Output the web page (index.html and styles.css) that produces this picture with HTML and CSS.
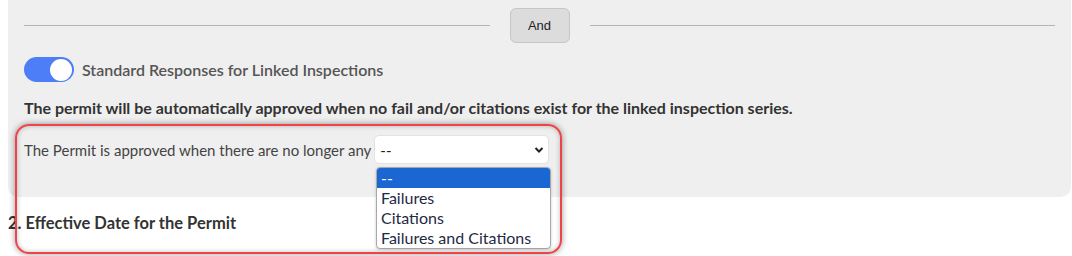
FILE: index.html
```html
<!DOCTYPE html>
<html lang="en">
<head>
<meta charset="UTF-8">
<meta name="viewport" content="width=device-width, initial-scale=1.0">
<title>Permit Approval</title>
<link rel="stylesheet" href="styles.css">
</head>
<body>
  <div class="panel">
    <div class="divider">
      <span class="line"></span>
      <button class="and-btn">And</button>
      <span class="line"></span>
    </div>

    <div class="toggle-row">
      <span class="toggle"><span class="knob"></span></span>
      <span class="toggle-label">Standard Responses for Linked Inspections</span>
    </div>

    <p class="note">The permit will be automatically approved when no fail and/or citations exist for the linked inspection series.</p>

    <div class="select-row">
      <label for="approveWhen">The Permit is approved when there are no longer any</label>
      <div class="select" id="approveWhen">
        <span>--</span>
        <svg width="10" height="8" viewBox="0 0 10 8"><path d="M1.5 2 L5 5.5 L8.5 2" fill="none" stroke="#222" stroke-width="2"/></svg>
      </div>
    </div>
  </div>

  <h3 class="section">2. Effective Date for the Permit</h3>

  <!-- open dropdown list -->
  <ul class="options">
    <li class="active">--</li>
    <li>Failures</li>
    <li>Citations</li>
    <li>Failures and Citations</li>
  </ul>

  <!-- annotation -->
  <div class="highlight"></div>
</body>
</html>
```

FILE: styles.css
```css
body {
  margin: 0;
  background: #fff;
  font-family: 'Lato', 'Liberation Sans', sans-serif;
  color: #333;
  position: relative;
  height: 256px;
  overflow: hidden;
}
.panel {
  margin-left: 8px;
  width: 1063px;
  height: 197px;
  box-sizing: border-box;
  background: #efefef;
  border-radius: 0 0 10px 10px;
  padding: 8px 16px 0;
}
.divider {
  display: flex;
  align-items: center;
  gap: 20px;
}
.line {
  flex: 1;
  height: 1px;
  background: #b4b4b4;
}
.and-btn {
  width: 60px;
  height: 35px;
  background: #dcdcdc;
  border: 1px solid #c6c6c6;
  border-radius: 6px;
  font-family: 'Liberation Sans', Arial, sans-serif;
  font-size: 13px;
  color: #222;
}
.toggle-row {
  display: flex;
  align-items: center;
  gap: 8px;
  margin-top: 14px;
  height: 25px;
}
.toggle {
  width: 50px;
  height: 25px;
  border-radius: 13px;
  background: #4d7ef7;
  display: flex;
  justify-content: flex-end;
  align-items: center;
  padding: 0 2px;
  box-sizing: border-box;
}
.knob {
  width: 22px;
  height: 22px;
  border-radius: 50%;
  background: #fff;
}
.toggle-label {
  font-size: 16px;
  font-weight: 600;
  color: #555;
}
.note {
  margin: 16px 0 0;
  height: 20px;
  line-height: 20px;
  font-size: 16px;
  font-weight: 700;
  color: #333;
}
.select-row {
  display: flex;
  align-items: center;
  gap: 3px;
  margin-top: 17px;
  height: 29px;
}
.select-row label {
  font-size: 15px;
  color: #444;
}
.select {
  width: 175px;
  height: 29px;
  box-sizing: border-box;
  background: #fff;
  border: 1px solid #e2e2e2;
  border-radius: 5px;
  display: flex;
  align-items: center;
  justify-content: space-between;
  padding: 0 4px 0 5px;
  font-size: 15px;
  color: #222;
}
.section {
  margin: 16px 0 0 8px;
  font-size: 16.5px;
  font-weight: 700;
  color: #333;
}
.options {
  position: absolute;
  left: 376px;
  top: 167px;
  width: 175px;
  margin: 0;
  padding: 0;
  list-style: none;
  box-sizing: border-box;
  background: #fff;
  border: 1px solid #a8a8a8;
  border-radius: 4px;
  overflow: hidden;
  box-shadow: 0 1px 3px rgba(0, 0, 0, 0.2);
}
.options li {
  height: 20px;
  line-height: 20px;
  padding-left: 4px;
  font-size: 16px;
  color: #1f2a44;
}
.options li.active {
  background: #1a66d2;
  color: #fff;
}
.highlight {
  position: absolute;
  left: 15px;
  top: 124px;
  width: 547px;
  height: 130px;
  box-sizing: border-box;
  border: 2px solid #ef4249;
  border-radius: 14px;
  box-shadow: 0 0 6px rgba(0, 0, 0, 0.4), inset 0 0 5px rgba(0, 0, 0, 0.25);
}
```
